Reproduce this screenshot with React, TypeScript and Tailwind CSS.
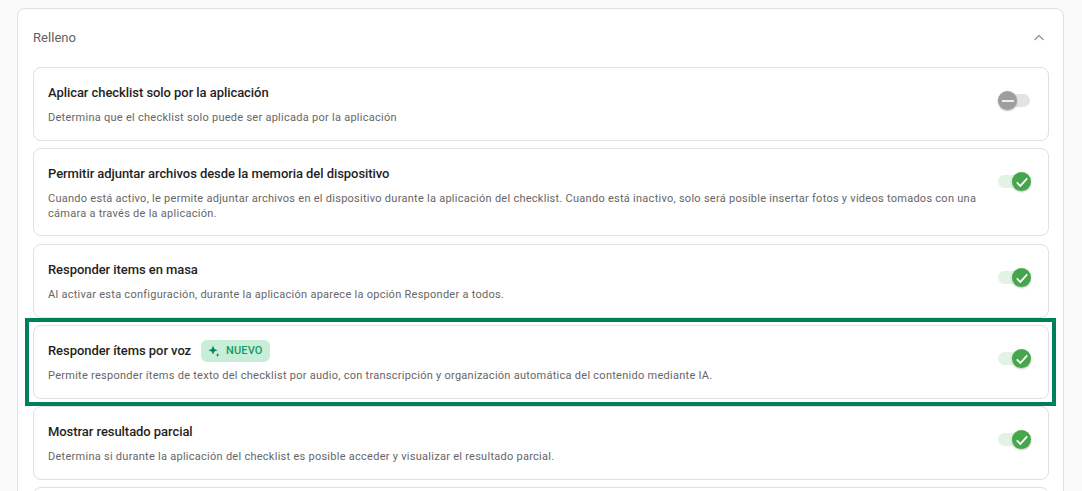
import React from "react";

function Toggle({ on }: { on: boolean }) {
  return (
    <div className="relative w-[32px] h-[13px] shrink-0 mt-[26px]">
      <div className={on ? "w-[28px] h-full rounded-full bg-[#e2f3e3]" : "w-full h-full rounded-full bg-[#e3e3e3]"} />
      <div
        className={
          on
            ? "absolute right-[-1px] top-[-3px] w-[19px] h-[19px] rounded-full bg-[#46a64c] flex items-center justify-center shadow-[0_1px_2px_rgba(0,0,0,0.25)]"
            : "absolute left-0 top-[-3px] w-[19px] h-[19px] rounded-full bg-[#9e9e9e] flex items-center justify-center shadow-[0_1px_2px_rgba(0,0,0,0.25)]"
        }
      >
        {on ? (
          <svg width="14" height="14" viewBox="0 0 14 14" fill="none">
            <path d="M1.8 7.4 L5.3 11 L12.2 3.4" stroke="#fff" strokeWidth="1.8" />
          </svg>
        ) : (
          <div className="w-[12px] h-[2px] bg-[#eeeeee]" />
        )}
      </div>
    </div>
  );
}

function Row({
  title,
  desc,
  badge,
  h,
  on = true,
}: {
  title: string;
  desc: string;
  badge?: boolean;
  h: string;
  on?: boolean;
}) {
  return (
    <div className={`${h} shrink-0 rounded-[8px] border border-[#e0e0e0] bg-white pl-[14px] pr-[18px] flex items-start justify-between`}>
      <div className="w-[936px] pt-[15px]">
        <div className="flex items-center h-[20px]">
          <span className="text-[13px] leading-[20px] font-[480] text-[#1f1f1f] tracking-[-0.06px]">{title}</span>
          {badge && (
            <span className="ml-[10px] h-[22px] w-[69px] rounded-[6px] bg-[#c8eed9] flex items-center pl-[7px] gap-[6px] text-[11px] font-medium text-[#0f9d63] tracking-[0.1px]">
              <svg width="12" height="12" viewBox="0 0 12 12" fill="#00875f">
                <path d="M5 0.8 L6.4 3.9 L9.6 5.2 L6.4 6.5 L5 9.6 L3.6 6.5 L0.4 5.2 L3.6 3.9 Z" />
                <path d="M9.6 8.2 L10.2 9.4 L11.5 10 L10.2 10.6 L9.6 11.9 L9 10.6 L7.7 10 L9 9.4 Z" />
              </svg>
              NUEVO
            </span>
          )}
        </div>
        <div className="mt-[7px] text-[11px] leading-[15px] text-[#666666] tracking-[0.267px]">{desc}</div>
      </div>
      <Toggle on={on} />
    </div>
  );
}

export default function App() {
  return (
    <div className="relative h-[491px] w-[1082px] overflow-hidden bg-[#fafafa] pt-[8px] pl-[17px] font-['Roboto',sans-serif]">
      <div className="w-[1047px] h-[520px] rounded-[8px] border border-[#e0e0e0] bg-white pl-[15px] pr-[14px]">
        <div className="h-[58px] flex items-center justify-between pr-[4px]">
          <span className="text-[13px] text-[#616161] font-[450] tracking-[0.05px]">Relleno</span>
          <svg width="12" height="12" viewBox="0 0 12 12" fill="none">
            <path d="M1.5 8 L6 3.5 L10.5 8" stroke="#8a8a8a" strokeWidth="1.1" />
          </svg>
        </div>
        <div className="flex flex-col">
          <Row h="h-[74px]" on={false} title="Aplicar checklist solo por la aplicación" desc="Determina que el checklist solo puede ser aplicada por la aplicación" />
          <div className="h-[7px] shrink-0" />
          <Row
            h="h-[88px]"
            title="Permitir adjuntar archivos desde la memoria del dispositivo"
            desc="Cuando está activo, le permite adjuntar archivos en el dispositivo durante la aplicación del checklist. Cuando está inactivo, solo será posible insertar fotos y videos tomados con una cámara a través de la aplicación."
          />
          <div className="h-[8px] shrink-0" />
          <Row h="h-[74px]" title="Responder items en masa" desc="Al activar esta configuración, durante la aplicación aparece la opción Responder a todos." />
          <div className="h-[7px] shrink-0" />
          <Row h="h-[74px]" badge title="Responder ítems por voz" desc="Permite responder ítems de texto del checklist por audio, con transcripción y organización automática del contenido mediante IA." />
          <div className="h-[7px] shrink-0" />
          <Row h="h-[74px]" title="Mostrar resultado parcial" desc="Determina si durante la aplicación del checklist es posible acceder y visualizar el resultado parcial." />
          <div className="h-[7px] shrink-0" />
          <div className="h-[74px] shrink-0 rounded-[8px] border border-[#e0e0e0] bg-white" />
        </div>
      </div>
      <div className="absolute left-[25px] top-[318px] w-[1031px] h-[88px] border-[4px] border-[#00805a]" />
    </div>
  );
}
